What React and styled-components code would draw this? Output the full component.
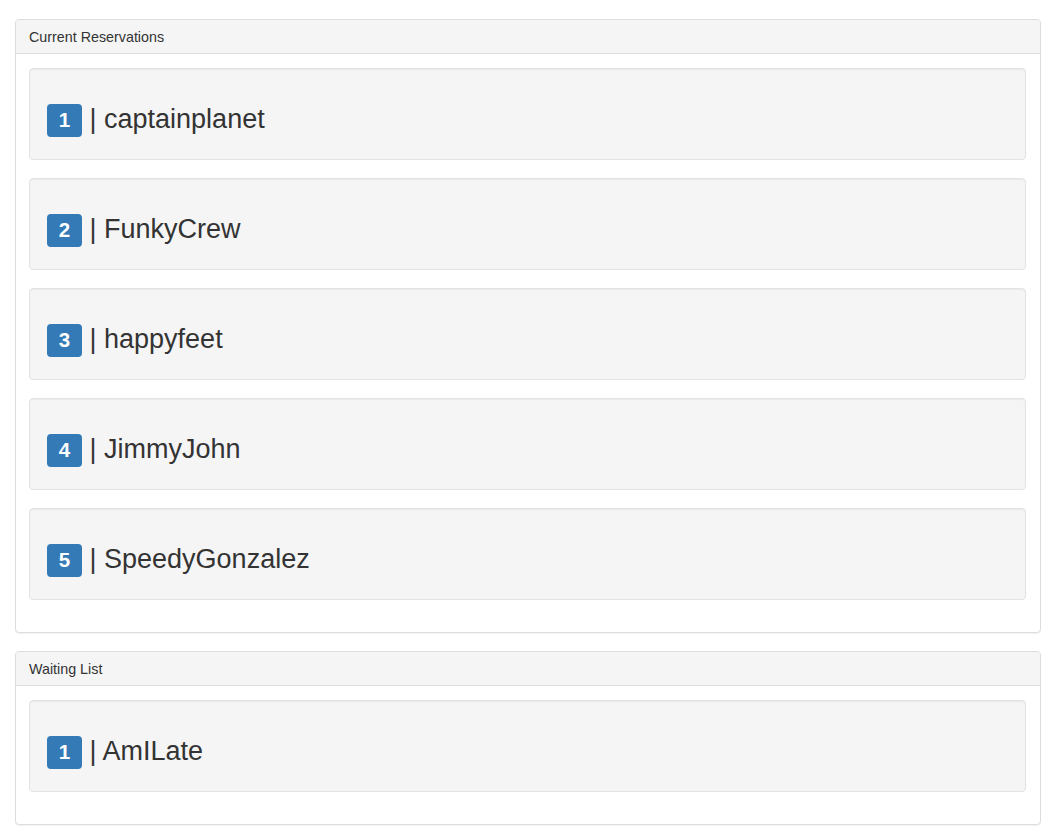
import React from 'react';
import styled, { createGlobalStyle } from 'styled-components';

const GlobalStyle = createGlobalStyle`
  html, body {
    margin: 0;
    padding: 0;
    background: #fff;
    overflow: hidden;
  }
  body {
    font-family: "Liberation Sans", Arial, Helvetica, sans-serif;
    color: #333;
  }
`;

const Page = styled.div`
  padding: 19px 20px 0 15px;
`;

const Panel = styled.div`
  border: 1px solid #ddd;
  border-radius: 4px;
  background: #fff;
  margin-bottom: 18px;
  box-shadow: 0 1px 1px rgba(0, 0, 0, 0.05);
`;

const PanelHeading = styled.div`
  background: #f5f5f5;
  border-bottom: 1px solid #ddd;
  border-radius: 3px 3px 0 0;
  height: 33px;
  padding: 0 13px;
  display: flex;
  align-items: center;
  font-size: 14.3px;
  color: #333;
`;

const PanelBody = styled.div`
  padding: 14px 14px 14px 13px;
`;

const Well = styled.div`
  box-sizing: border-box;
  height: 92px;
  margin-bottom: 18px;
  padding: 0 17px;
  background: #f5f5f5;
  border: 1px solid #e3e3e3;
  border-radius: 4px;
  box-shadow: inset 0 1px 1px rgba(0, 0, 0, 0.05);
`;

const Name = styled.h3`
  margin: 0;
  padding-top: 36px;
  font-size: 27px;
  font-weight: 400;
  line-height: 1.1;
  color: #333;
`;

const Badge = styled.span`
  display: inline-block;
  box-sizing: border-box;
  min-width: 35px;
  margin-top: -6px;
  padding: 6px 0 6px;
  font-size: 20.5px;
  font-weight: 700;
  line-height: 1;
  color: #fff;
  text-align: center;
  background: #337ab7;
  border-radius: 4px;
  vertical-align: 1px;
`;

const reservations = ['captainplanet', 'FunkyCrew', 'happyfeet', 'JimmyJohn', 'SpeedyGonzalez'];
const waiting = ['AmILate'];

function ListPanel({ title, names }) {
  return (
    <Panel>
      <PanelHeading>{title}</PanelHeading>
      <PanelBody>
        {names.map((name, i) => (
          <Well key={name}>
            <Name>
              <Badge>{i + 1}</Badge> | {name}
            </Name>
          </Well>
        ))}
      </PanelBody>
    </Panel>
  );
}

export default function App() {
  return (
    <Page>
      <GlobalStyle />
      <ListPanel title="Current Reservations" names={reservations} />
      <ListPanel title="Waiting List" names={waiting} />
    </Page>
  );
}
